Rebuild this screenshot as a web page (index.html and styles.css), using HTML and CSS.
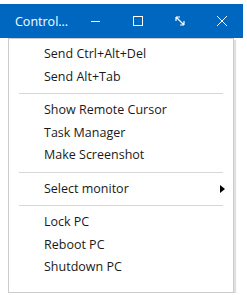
FILE: index.html
```html
<!DOCTYPE html>
<html>
<head>
    <title>Control</title>
    <link rel="stylesheet" href="styles.css">
</head>
<body>
    <div class="titlebar">
        <div class="title">Control...</div>
        <div class="tb-button">
            <svg width="10" height="10" viewBox="0 0 10 10"><path d="M0 5.5h9" stroke="#fff" stroke-width="1" fill="none"/></svg>
        </div>
        <div class="tb-button">
            <svg width="10" height="10" viewBox="0 0 10 10"><rect x="0.5" y="0.5" width="9" height="9" stroke="#fff" stroke-width="1" fill="none"/></svg>
        </div>
        <div class="tb-button">
            <svg width="10" height="10" viewBox="0 0 10 10"><path d="M1 1l8 8M1 1v4M1 1h4M9 9v-4M9 9h-4" stroke="#fff" stroke-width="1.2" fill="none"/></svg>
        </div>
        <div class="tb-button">
            <svg width="10" height="10" viewBox="0 0 10 10"><path d="M0 0l10 10M10 0l-10 10" stroke="#fff" stroke-width="1" fill="none"/></svg>
        </div>
    </div>

    <div class="menu">
        <div class="menu-item">Send Ctrl+Alt+Del</div>
        <div class="menu-item">Send Alt+Tab</div>
        <div class="separator"></div>
        <div class="menu-item">Show Remote Cursor</div>
        <div class="menu-item">Task Manager</div>
        <div class="menu-item">Make Screenshot</div>
        <div class="separator"></div>
        <div class="menu-item submenu">Select monitor</div>
        <div class="separator"></div>
        <div class="menu-item">Lock PC</div>
        <div class="menu-item">Reboot PC</div>
        <div class="menu-item">Shutdown PC</div>
    </div>
</body>
</html>
```

FILE: styles.css
```css
body {
    margin: 0;
    background: #ffffff;
    font-family: 'Open Sans', sans-serif;
    font-size: 12.5px;
    color: #1a1a1a;
}

.titlebar {
    margin-top: 4px;
    width: 243px;
    height: 34px;
    background: #0067c0;
    display: flex;
    align-items: center;
}

.title {
    width: 75px;
    padding-left: 15px;
    box-sizing: border-box;
    color: #ffffff;
    font-size: 12.5px;
}

.tb-button {
    width: 42px;
    height: 34px;
    display: flex;
    align-items: center;
    justify-content: center;
}

.tb-button svg {
    display: block;
}

.menu {
    margin-left: 8px;
    width: 226px;
    height: 255px;
    box-sizing: border-box;
    border: 1px solid #cccccc;
    box-shadow: 2px 2px 1px rgba(0,0,0,0.12);
    padding-top: 4px;
    background: #ffffff;
}

.menu-item {
    height: 22.5px;
    line-height: 22.5px;
    padding-left: 35px;
    position: relative;
}

.submenu:after {
    content: "";
    position: absolute;
    right: 8px;
    top: 7px;
    border-left: 5px solid #000;
    border-top: 4px solid transparent;
    border-bottom: 4px solid transparent;
}

.separator {
    height: 1px;
    background: #d7d7d7;
    margin: 5px 10px 5px 10px;
}
```
